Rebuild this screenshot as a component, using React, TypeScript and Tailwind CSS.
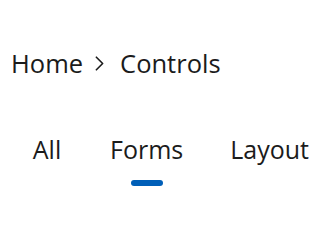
import { ChevronRight } from 'lucide-react';

const tabs = ['All', 'Forms', 'Layout'];

export default function App() {
  const active = 'Forms';
  return (
    <div
      className="h-[240px] w-[320px] overflow-hidden bg-white text-[#1b1b1b]"
      style={{ fontFamily: '"Open Sans", "Noto Sans", sans-serif' }}
    >
      <nav className="flex items-center pl-[11px] pt-[46px] text-[25.5px] leading-[34px]">
        <span>Home</span>
        <ChevronRight className="ml-[4px] mr-[8px] h-[25px] w-[25px]" strokeWidth={1.6} />
        <span>Controls</span>
      </nav>
      <div className="mt-[52px] flex gap-[47px] pl-[31px] text-[25px] leading-[34px]">
        {tabs.map((t) => (
          <div key={t} className="flex flex-col items-center">
            <span>{t}</span>
            <span
              className={
                t === active
                  ? 'mt-[14px] h-[6px] w-[32px] rounded-full bg-[#005fb8]'
                  : 'mt-[14px] h-[6px] w-[32px]'
              }
            />
          </div>
        ))}
      </div>
    </div>
  );
}
